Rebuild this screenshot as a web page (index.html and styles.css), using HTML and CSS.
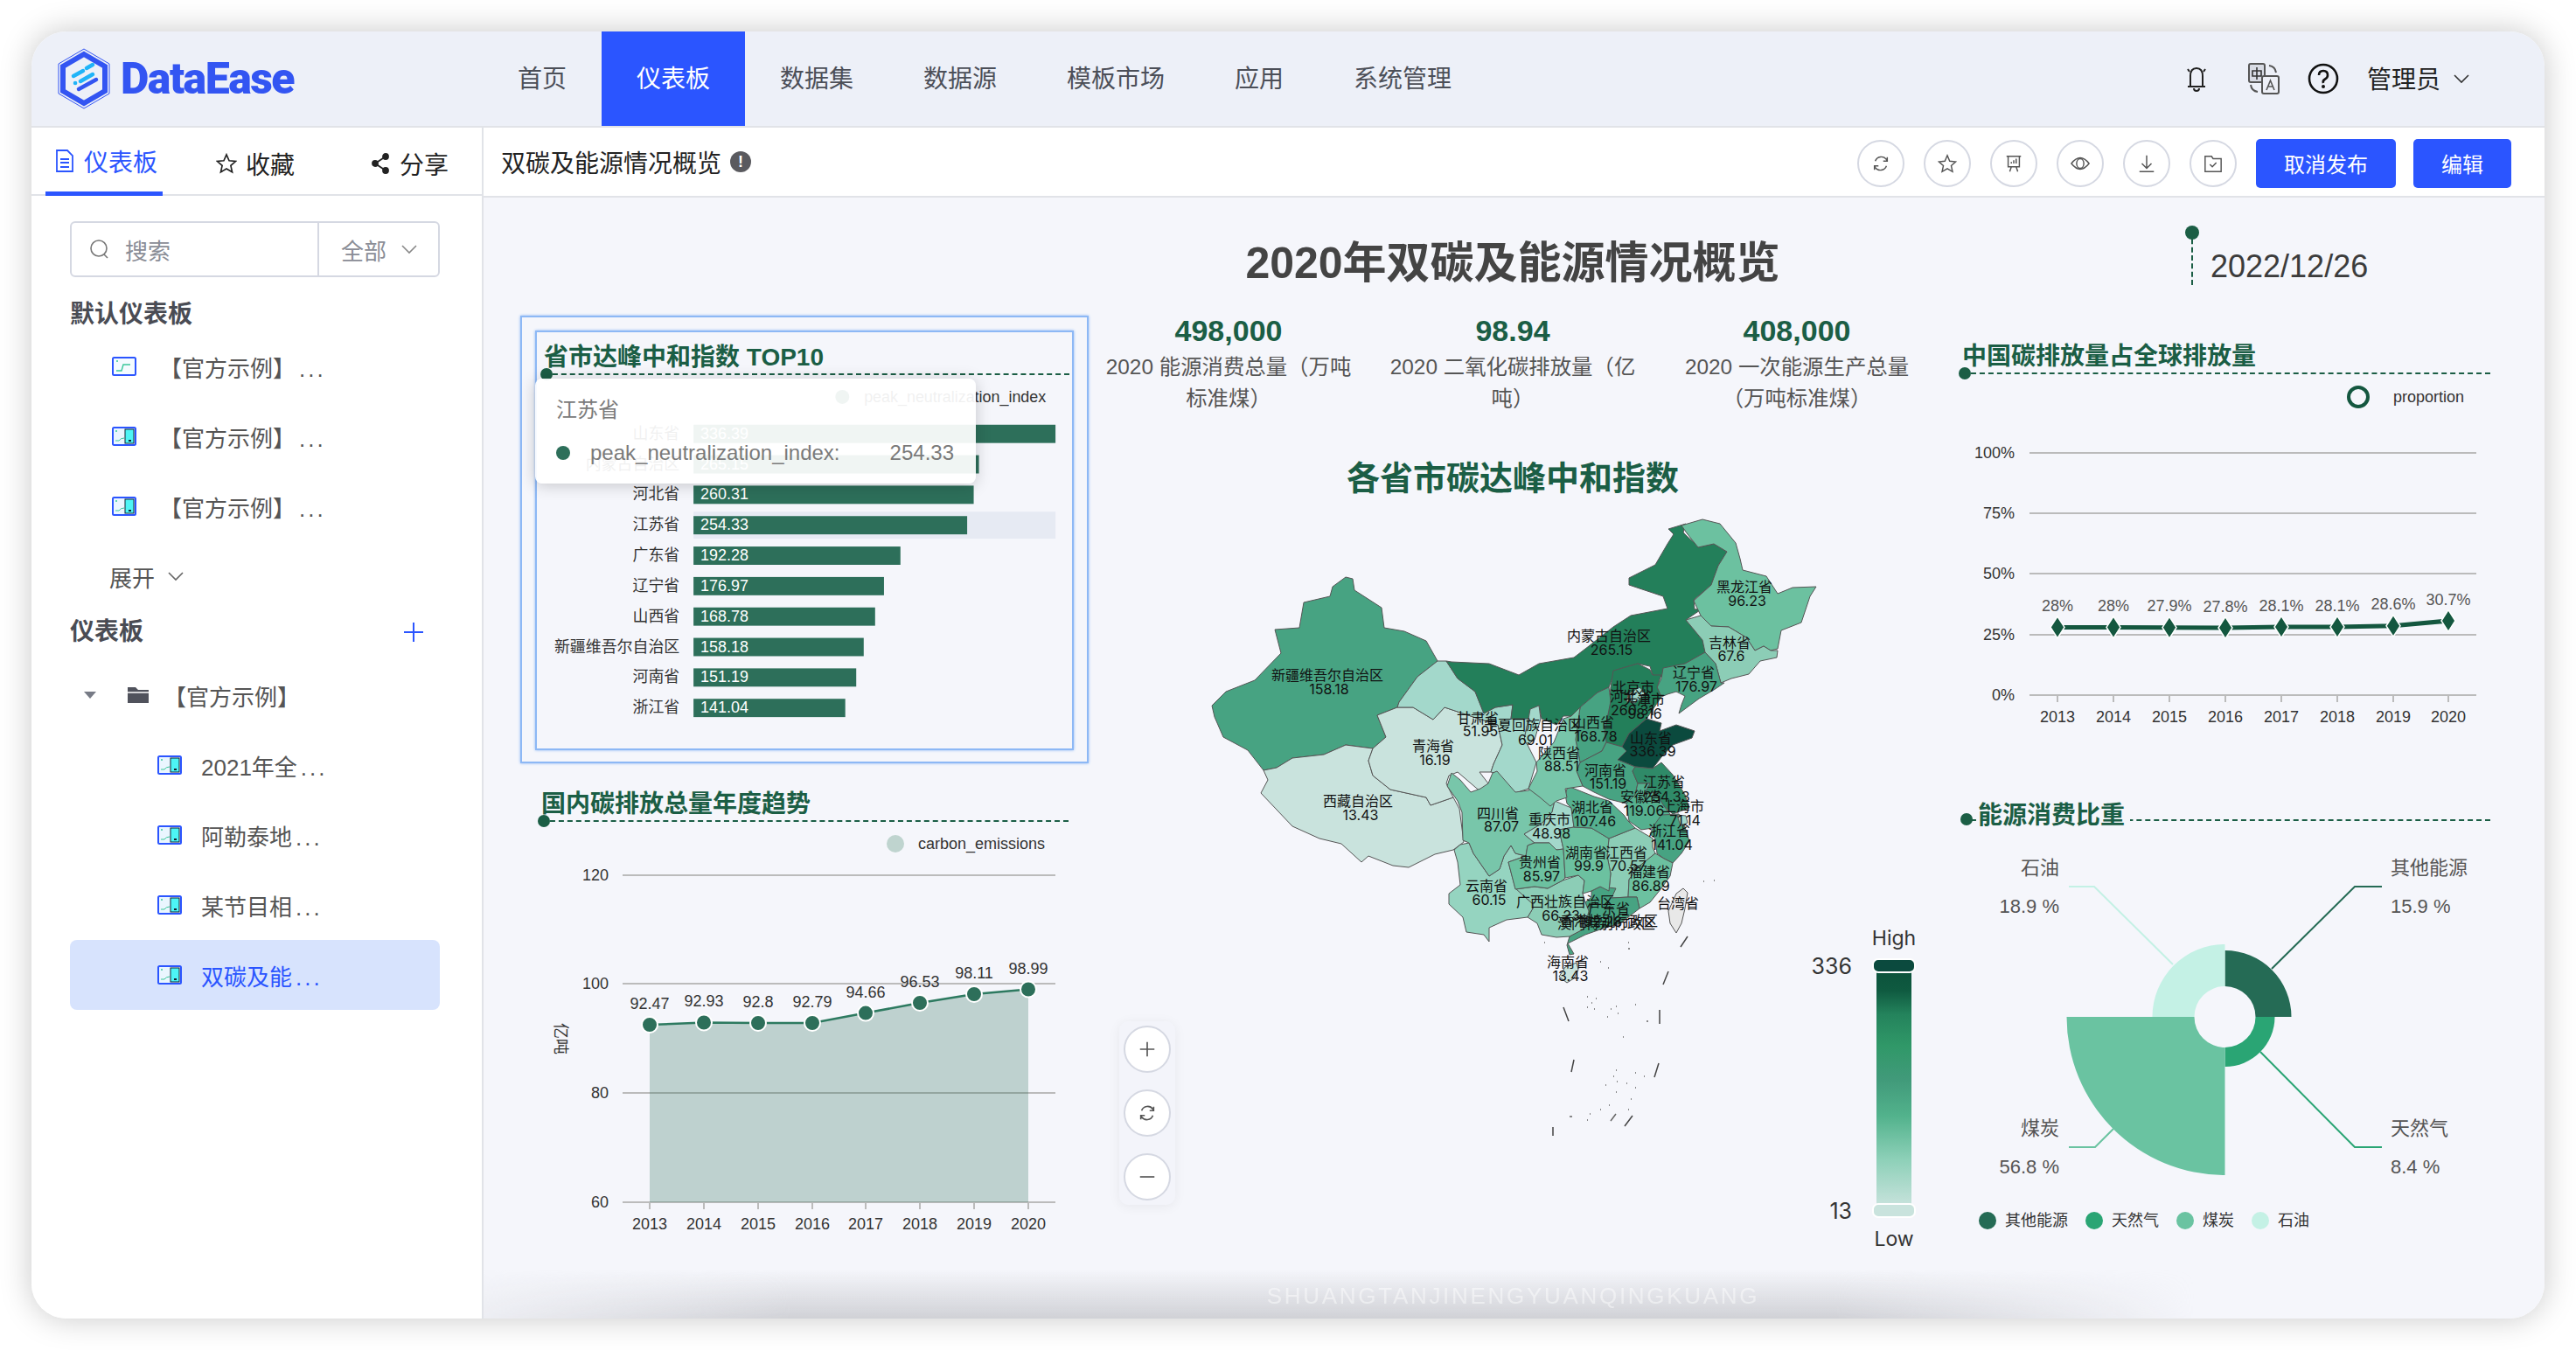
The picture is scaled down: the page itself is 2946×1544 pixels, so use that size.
FILE: index.html
```html
<!DOCTYPE html>
<html lang="en">
<head>
    <meta charset="UTF-8">
    <meta name="viewport" content="width=device-width, initial-scale=1.0">
    <title>DataEase</title>
    <link rel="stylesheet" href="styles.css">
</head>
<body>
    <svg class="defs" width="0" height="0">
        <symbol id="board" viewBox="0 0 28 22">
            <rect x="1" y="1" width="26" height="20" rx="1.5" fill="#eaf6ff" stroke="#2b55ff" stroke-width="2"/>
            <rect x="15" y="3" width="10" height="16" fill="#4df5f5" stroke="#123" stroke-width="1"/>
            <rect x="19" y="15" width="3" height="2" fill="#123"/>
            <path d="M4 16h4q2-3 6-3" fill="none" stroke="#38c79a" stroke-width="1"/>
            <circle cx="5" cy="5" r="1" fill="#38c79a"/>
        </symbol>
        <symbol id="board-line" viewBox="0 0 28 22">
            <rect x="1" y="1" width="26" height="20" rx="1.5" fill="#f4fbff" stroke="#2b55ff" stroke-width="2"/>
            <path d="M5 16h6l2-7h8" fill="none" stroke="#38c79a" stroke-width="1.4"/>
            <circle cx="6" cy="5" r="1" fill="#38c79a"/>
        </symbol>
    </svg>

    <div class="window">
        <header class="header">
            <div class="logo">
                <svg class="logo-mark" viewBox="0 0 60 70">
                    <path d="M30 1 59 18v34L30 69 1 52V18z" fill="none" stroke="#3355f2" stroke-width="1"/>
                    <path d="M30 7 54 21v28L30 63 6 49V21z" fill="none" stroke="#3355f2" stroke-width="6"/>
                    <path d="M33 23l7-4M18 32l11-6" stroke="#20b4f8" stroke-width="4.5" stroke-linecap="round"/>
                    <path d="M26 38l14-8M20 40h.1" stroke="#20b4f8" stroke-width="4.5" stroke-linecap="round"/>
                    <path d="M24 47l20-11" stroke="#3355f2" stroke-width="4.5" stroke-linecap="round"/>
                </svg>
                <span class="logo-text">DataEase</span>
            </div>
            <nav class="nav">
                <a href="#">首页</a>
                <a href="#" class="active">仪表板</a>
                <a href="#">数据集</a>
                <a href="#">数据源</a>
                <a href="#">模板市场</a>
                <a href="#">应用</a>
                <a href="#">系统管理</a>
            </nav>
            <div class="header-right">
                <svg class="icon-bell" viewBox="0 0 26 32" fill="none" stroke="#222" stroke-width="2">
                    <path d="M13 4c-5 0-7 4-7 9v12h14V13c0-5-2-9-7-9zM3 25h20M10 27a3 3 0 0 0 6 0M3 5l2 3M23 5l-2 3"/>
                </svg>
                <svg class="icon-lang" viewBox="0 0 36 36" fill="none" stroke="#555" stroke-width="2">
                    <rect x="1" y="1" width="18" height="21" rx="2" fill="#d8dbe4"/>
                    <path d="M10 5v14M5 9h10v6H5z" stroke="#333" stroke-width="1.6"/>
                    <rect x="16" y="15" width="19" height="20" rx="2" fill="#eef0f7"/>
                    <path d="M21 31l4.500-11 4.500 11M22.500 27h6" stroke-width="1.6"/>
                    <path d="M24 3q7 1 8 8M3 25q1 7 8 8"/>
                </svg>
                <svg class="icon-help" viewBox="0 0 36 36" fill="none" stroke="#111" stroke-width="2.600">
                    <circle cx="18" cy="18" r="16"/>
                    <path d="M13 14q0-5 5-5t5 5q0 3-3 4.500t-2 4.500"/>
                    <circle cx="18" cy="27" r="1" stroke-width="2"/>
                </svg>
                <span class="user">管理员</span>
                <svg class="chevron" viewBox="0 0 20 12" fill="none" stroke="#333" stroke-width="1.600"><path d="M2 2l8 8 8-8"/></svg>
            </div>
        </header>

        <div class="body">
            <aside class="sidebar">
                <div class="tabs">
                    <div class="tab active">
                        <svg class="tab-icon" viewBox="0 0 22 26" fill="none" stroke="#2b55ff" stroke-width="1.800"><path d="M2 1h12l6 6v18H2zM6 11h10M6 15h10M6 20h10"/></svg>
                        <span>仪表板</span>
                    </div>
                    <div class="tab">
                        <svg class="tab-icon" viewBox="0 0 26 26" fill="none" stroke="#222" stroke-width="1.800"><path d="M13 2l3.300 7.500 8 .8-6 5.300 1.800 8L13 19.500 5.900 23.600l1.800-8-6-5.300 8-.8z"/></svg>
                        <span>收藏</span>
                    </div>
                    <div class="tab">
                        <svg class="tab-icon" viewBox="0 0 22 26" fill="#222" stroke="#222" stroke-width="1.800"><path d="M17 5 5 13l12 8" fill="none"/><circle cx="17" cy="5" r="3"/><circle cx="5" cy="13" r="3"/><circle cx="17" cy="21" r="3"/></svg>
                        <span>分享</span>
                    </div>
                </div>
                <div class="side-content">
                    <div class="search">
                        <div class="search-input">
                            <svg class="search-icon" viewBox="0 0 24 24" fill="none" stroke="#777" stroke-width="1.600"><circle cx="11" cy="11" r="9"/><path d="M17 18l4 4"/></svg>
                            <span>搜索</span>
                        </div>
                        <div class="search-type">
                            <span>全部</span>
                            <svg class="chevron" viewBox="0 0 20 12" fill="none" stroke="#888" stroke-width="1.600"><path d="M2 2l8 8 8-8"/></svg>
                        </div>
                    </div>
                    <div class="side-title">默认仪表板</div>
                    <div class="side-item"><svg class="board-icon"><use href="#board-line"/></svg><span>【官方示例】<span class="dots">...</span></span></div>
                    <div class="side-item"><svg class="board-icon"><use href="#board"/></svg><span>【官方示例】<span class="dots">...</span></span></div>
                    <div class="side-item"><svg class="board-icon"><use href="#board"/></svg><span>【官方示例】<span class="dots">...</span></span></div>
                    <div class="side-more">
                        <span>展开</span>
                        <svg class="chevron" viewBox="0 0 20 12" fill="none" stroke="#666" stroke-width="1.600"><path d="M2 2l8 8 8-8"/></svg>
                    </div>
                    <div class="side-title side-title-add">
                        <span>仪表板</span>
                        <svg class="add-icon" viewBox="0 0 24 24" stroke="#2b55ff" stroke-width="2"><path d="M12 1v22M1 12h22"/></svg>
                    </div>
                    <div class="folder-row">
                        <span class="caret"></span>
                        <svg class="folder-icon" viewBox="0 0 26 22" fill="#50525c"><path d="M1 2h9l3 3h12v15H1z"/><path d="M1 8h24" stroke="#fff" stroke-width="1.500"/></svg>
                        <span>【官方示例】</span>
                    </div>
                    <div class="tree-item"><svg class="board-icon"><use href="#board"/></svg><span>2021年全<span class="dots">...</span></span></div>
                    <div class="tree-item"><svg class="board-icon"><use href="#board"/></svg><span>阿勒泰地<span class="dots">...</span></span></div>
                    <div class="tree-item"><svg class="board-icon"><use href="#board"/></svg><span>某节目相<span class="dots">...</span></span></div>
                    <div class="tree-item selected"><svg class="board-icon"><use href="#board"/></svg><span>双碳及能<span class="dots">...</span></span></div>
                </div>
            </aside>

            <main class="main">
                <div class="toolbar">
                    <span class="page-name">双碳及能源情况概览</span>
                    <span class="info-dot">!</span>
                    <div class="tool-group">
                        <span class="round-btn"><svg viewBox="0 0 24 24"><path d="M5 9a8 8 0 0 1 14-2l1 2M19 15a8 8 0 0 1-14 2l-1-2M20 4v5h-5M4 20v-5h5"/></svg></span>
                        <span class="round-btn"><svg viewBox="0 0 24 24"><path d="M12 2l3 7 7.500.8-5.600 5 1.600 7.400L12 18.500l-6.500 3.700 1.600-7.400-5.600-5L9 9z"/></svg></span>
                        <span class="round-btn"><svg viewBox="0 0 24 24"><path d="M3 3h18M5 3v13h14V3M9 16l-2 6M15 16l2 6M9 12v-2M12 12V8M15 12V6"/></svg></span>
                        <span class="round-btn"><svg viewBox="0 0 24 24"><path d="M1 12q11-14 22 0-11 14-22 0z"/><ellipse cx="12" cy="12" rx="4.500" ry="6"/></svg></span>
                        <span class="round-btn"><svg viewBox="0 0 24 24"><path d="M12 2v16M6 12l6 6 6-6M3 22h18"/></svg></span>
                        <span class="round-btn"><svg viewBox="0 0 24 24"><path d="M2 3h8l2 3h10v16H2zM8 13l3 3 5-5"/></svg></span>
                        <button class="btn">取消发布</button>
                        <button class="btn btn-small">编辑</button>
                    </div>
                </div>

                <div class="dash">
                    <h1 class="dash-title">2020年双碳及能源情况概览</h1>
                    <div class="dash-date"><span class="date-text">2022/12/26</span></div>

                    <section class="col col-left">
                        <div class="panel-select">
                            <div class="panel-inner">
                                <div class="chart-title"><span>省市达峰中和指数 TOP10</span></div>
                                <svg class="chart chart-bars" viewBox="612 428 615 426">
                                    <circle class="legend-dot" cx="963" cy="453" r="8"/>
                                    <text class="ct ct-start" x="988" y="453">peak_neutralization_index</text>
                                    <rect class="row-hover" x="792" y="585" width="416" height="31"/>
                                    <g class="bar">
                                        <rect x="792" y="485" width="416" height="21"/>
                                        <rect x="792" y="520" width="328" height="21"/>
                                        <rect x="792" y="555" width="322" height="21"/>
                                        <rect x="792" y="590" width="314.500" height="21"/>
                                        <rect x="792" y="625" width="237.800" height="21"/>
                                        <rect x="792" y="660" width="218.900" height="21"/>
                                        <rect x="792" y="695" width="208.700" height="21"/>
                                        <rect x="792" y="730" width="195.600" height="21"/>
                                        <rect x="792" y="765" width="187" height="21"/>
                                        <rect x="792" y="800" width="174.400" height="21"/>
                                    </g>
                                    <g class="ct ct-end">
                                        <text x="776" y="495">山东省</text>
                                        <text x="776" y="530">内蒙古自治区</text>
                                        <text x="776" y="565">河北省</text>
                                        <text x="776" y="600">江苏省</text>
                                        <text x="776" y="635">广东省</text>
                                        <text x="776" y="670">辽宁省</text>
                                        <text x="776" y="705">山西省</text>
                                        <text x="776" y="740">新疆维吾尔自治区</text>
                                        <text x="776" y="775">河南省</text>
                                        <text x="776" y="810">浙江省</text>
                                    </g>
                                    <g class="ct ct-start ct-white">
                                        <text x="800" y="495">336.39</text>
                                        <text x="800" y="530">265.15</text>
                                        <text x="800" y="565">260.31</text>
                                        <text x="800" y="600">254.33</text>
                                        <text x="800" y="635">192.28</text>
                                        <text x="800" y="670">176.97</text>
                                        <text x="800" y="705">168.78</text>
                                        <text x="800" y="740">158.18</text>
                                        <text x="800" y="775">151.19</text>
                                        <text x="800" y="810">141.04</text>
                                    </g>
                                </svg>
                                <div class="tooltip">
                                    <div class="tooltip-title">江苏省</div>
                                    <div class="tooltip-row">
                                        <span class="tooltip-dot"></span>
                                        <span class="tooltip-name">peak_neutralization_index:</span>
                                        <span>254.33</span>
                                    </div>
                                </div>
                            </div>
                        </div>
                        <div class="chart-block">
                            <div class="chart-title"><span>国内碳排放总量年度趋势</span></div>
                            <svg class="chart chart-trend" viewBox="595 940 650 480">
                                <circle class="area-dot" cx="1024" cy="965" r="10"/>
                                <text class="ct ct-start" x="1050" y="965">carbon_emissions</text>
                                <g class="grid">
                                    <path d="M712 1001H1207M712 1125H1207M712 1250H1207M712 1375H1207"/>
                                    <path d="M743 1375v8M805 1375v8M867 1375v8M929 1375v8M990 1375v8M1052 1375v8M1114 1375v8M1176 1375v8"/>
                                </g>
                                <g class="ct ct-end">
                                    <text x="696" y="1001">120</text>
                                    <text x="696" y="1125">100</text>
                                    <text x="696" y="1250">80</text>
                                    <text x="696" y="1375">60</text>
                                </g>
                                <text class="ct" transform="translate(641 1188) rotate(90)">亿吨</text>
                                <polygon class="area" points="743,1172 805,1169.500 867,1170 929,1170 990,1158.600 1052,1147 1114,1137 1176,1131.500 1176,1375 743,1375"/>
                                <polyline class="trend-line" points="743,1172 805,1169.500 867,1170 929,1170 990,1158.600 1052,1147 1114,1137 1176,1131.500"/>
                                <g class="trend-dots">
                                    <circle cx="743" cy="1172" r="9"/>
                                    <circle cx="805" cy="1169.500" r="9"/>
                                    <circle cx="867" cy="1170" r="9"/>
                                    <circle cx="929" cy="1170" r="9"/>
                                    <circle cx="990" cy="1158.600" r="9"/>
                                    <circle cx="1052" cy="1147" r="9"/>
                                    <circle cx="1114" cy="1137" r="9"/>
                                    <circle cx="1176" cy="1131.500" r="9"/>
                                </g>
                                <g class="ct">
                                    <text x="743" y="1148">92.47</text>
                                    <text x="805" y="1145">92.93</text>
                                    <text x="867" y="1146">92.8</text>
                                    <text x="929" y="1146">92.79</text>
                                    <text x="990" y="1135">94.66</text>
                                    <text x="1052" y="1123">96.53</text>
                                    <text x="1114" y="1113">98.11</text>
                                    <text x="1176" y="1108">98.99</text>
                                    <text x="743" y="1400">2013</text>
                                    <text x="805" y="1400">2014</text>
                                    <text x="867" y="1400">2015</text>
                                    <text x="929" y="1400">2016</text>
                                    <text x="990" y="1400">2017</text>
                                    <text x="1052" y="1400">2018</text>
                                    <text x="1114" y="1400">2019</text>
                                    <text x="1176" y="1400">2020</text>
                                </g>
                            </svg>
                        </div>
                    </section>

                    <section class="col col-center">
                        <div class="kpis">
                            <div class="kpi">
                                <div class="kpi-value">498,000</div>
                                <div class="kpi-label">2020 能源消费总量（万吨标准煤）</div>
                            </div>
                            <div class="kpi">
                                <div class="kpi-value">98.94</div>
                                <div class="kpi-label">2020 二氧化碳排放量（亿吨）</div>
                            </div>
                            <div class="kpi">
                                <div class="kpi-value">408,000</div>
                                <div class="kpi-label">2020 一次能源生产总量（万吨标准煤）</div>
                            </div>
                        </div>
                        <h2 class="map-title">各省市碳达峰中和指数</h2>
                        <svg class="map" viewBox="1380 590 820 860">
                            <g class="prov">
                                <polygon class="c4" points="1386,808 1402,792 1435,779 1465,748 1458,721 1486,719 1491,690 1521,683 1524,672 1539,661 1547,663 1549,676 1580,696 1583,719 1606,723 1631,734 1644,757 1621,775 1600,804 1598,810 1575,819 1585,844 1570,857 1539,853 1514,864 1478,868 1460,879 1445,882 1427,859 1399,844 1389,821"/>
                                <polygon class="c0" points="1445,882 1460,879 1478,868 1514,864 1539,853 1570,857 1565,871 1570,888 1590,904 1631,913 1636,922 1662,913 1669,926 1674,964 1662,973 1641,978 1611,993 1593,991 1565,980 1557,987 1534,966 1509,960 1478,946 1442,908 1450,893"/>
                                <polygon class="c0" points="1575,819 1598,810 1616,810 1639,824 1652,810 1685,821 1713,830 1718,853 1708,875 1705,884 1692,884 1702,897 1695,908 1667,884 1657,888 1654,897 1662,913 1636,922 1631,913 1590,904 1570,888 1565,871 1570,857 1585,844"/>
                                <polygon class="c1" points="1644,757 1654,757 1667,777 1687,792 1697,817 1710,810 1730,807 1728,823 1748,823 1743,847 1747,853 1757,873 1748,903 1733,908 1713,886 1705,884 1708,875 1718,853 1713,830 1685,821 1652,810 1639,824 1616,810 1598,810 1600,804 1621,775"/>
                                <polygon class="c6" points="1654,757 1660,758 1703,760 1737,773 1760,760 1800,753 1817,740 1845,718 1865,705 1907,697 1902,683 1863,670 1863,662 1893,647 1907,623 1914,612 1908,606 1928,600 1925,610 1930,615 1938,622 1942,627 1960,623 1975,632 1965,648 1957,670 1937,687 1938,698 1947,697 1928,710 1947,733 1950,747 1927,760 1907,765 1900,775 1890,773 1887,763 1873,760 1847,768 1840,787 1827,793 1807,810 1797,820 1788,820 1780,830 1763,823 1760,808 1752,812 1748,823 1728,823 1730,807 1710,810 1697,817 1687,792 1667,777"/>
                                <polygon class="c2" points="1923,602 1947,595 1967,600 1985,622 1990,640 1993,653 2020,660 2033,680 2050,673 2077,672 2070,683 2060,713 2037,722 2033,743 2025,745 2017,740 2007,745 1997,730 1977,718 1957,717 1945,705 1937,688 1957,670 1965,648 1975,632 1960,623 1942,627 1938,622 1930,612"/>
                                <polygon class="c1b" points="1928,710 1945,705 1957,717 1977,718 1997,730 2007,745 2017,740 2025,745 2033,745 2032,753 2013,757 2000,772 1980,777 1968,782 1962,760 1950,747 1947,733"/>
                                <polygon class="c4" points="1950,747 1962,760 1968,782 1972,782 1960,790 1943,800 1920,817 1923,807 1927,797 1917,792 1907,795 1900,798 1895,787 1900,777 1902,765 1927,760"/>
                                <polygon class="c6" points="1845,768 1873,760 1887,767 1890,773 1900,773 1895,787 1900,798 1883,823 1863,840 1855,855 1837,850 1835,837 1840,813 1842,787"/>
                                <polygon class="c1" points="1862,795 1875,787 1882,795 1870,805 1860,803"/>
                                <polygon class="c4" points="1827,793 1840,787 1842,803 1840,813 1835,837 1837,850 1832,860 1807,873 1802,847 1807,810"/>
                                <polygon class="c8" points="1855,855 1863,840 1883,823 1900,828 1898,837 1917,830 1938,837 1935,845 1913,853 1900,867 1890,880 1870,878 1850,870 1860,860"/>
                                <polygon class="c4" points="1837,850 1855,855 1860,860 1850,870 1870,878 1867,883 1873,897 1870,910 1860,920 1840,915 1823,907 1810,900 1803,883 1807,873 1832,860"/>
                                <polygon class="c5" points="1870,878 1890,880 1900,873 1913,887 1927,910 1932,925 1913,932 1903,923 1893,907 1880,910 1887,897 1873,897 1867,883"/>
                                <polygon class="c3" points="1873,897 1887,897 1880,910 1893,907 1903,923 1910,932 1900,943 1890,948 1877,950 1863,940 1860,920 1870,910"/>
                                <polygon class="c4" points="1900,933 1920,932 1927,947 1932,963 1923,977 1913,988 1903,983 1895,977 1893,960 1887,955 1893,943"/>
                                <polygon class="c1" points="1918,933 1928,934 1930,942 1922,946"/>
                                <polygon class="c1b" points="1840,960 1870,948 1890,960 1890,970 1893,977 1873,993 1863,1007 1862,1027 1843,1028 1840,1020 1842,1000 1838,980"/>
                                <polygon class="c2" points="1893,977 1903,983 1913,988 1910,1003 1900,1017 1887,1033 1875,1040 1872,1027 1862,1027 1863,1007 1873,993"/>
                                <polygon class="c4" points="1820,1020 1830,1015 1848,1017 1843,1028 1862,1027 1872,1027 1875,1040 1853,1057 1833,1063 1813,1070 1793,1080 1800,1092 1795,1093 1792,1082 1795,1072 1812,1063 1817,1043 1813,1033 1820,1027"/>
                                <polygon class="c1b" points="1733,1018 1755,1015 1770,1017 1787,1008 1805,1002 1812,1008 1810,1023 1813,1033 1817,1043 1812,1063 1795,1072 1780,1073 1763,1070 1758,1057 1747,1050 1753,1040 1753,1035"/>
                                <polygon class="c1c" points="1663,973 1670,967 1680,965 1685,977 1703,1003 1715,995 1720,980 1728,968 1733,977 1745,980 1725,987 1733,1017 1753,1035 1753,1040 1747,1050 1723,1053 1703,1062 1703,1078 1697,1070 1677,1067 1673,1050 1657,1035 1657,1023 1670,1013 1667,987"/>
                                <polygon class="c2b" points="1660,885 1670,893 1682,907 1693,903 1702,897 1707,885 1712,883 1733,907 1748,905 1752,903 1778,917 1775,930 1763,943 1743,955 1755,965 1747,968 1745,980 1733,977 1728,968 1720,980 1715,995 1703,1003 1685,977 1680,965 1673,962 1672,930 1667,917 1655,900"/>
                                <polygon class="c1" points="1778,917 1797,925 1800,947 1783,950 1788,972 1780,973 1772,965 1755,965 1743,955 1763,943 1775,930"/>
                                <polygon class="c2" points="1747,968 1755,965 1772,965 1780,973 1788,972 1790,1005 1787,1008 1770,1017 1755,1015 1733,1018 1725,987 1745,980"/>
                                <polygon class="c2" points="1800,947 1820,948 1840,960 1838,980 1842,1000 1840,1020 1830,1015 1820,1020 1810,1023 1812,1008 1805,1002 1790,1005 1788,972 1783,950"/>
                                <polygon class="c3" points="1790,910 1793,900 1823,912 1840,917 1857,933 1862,940 1870,948 1840,960 1820,948 1800,947 1797,925 1792,920"/>
                                <polygon class="c2b" points="1807,810 1802,847 1807,873 1803,883 1810,900 1790,903 1792,913 1780,917 1773,923 1760,912 1748,903 1758,883 1757,873 1777,850 1788,823 1797,820"/>
                                <polygon class="c1" points="1750,812 1760,808 1762,823 1755,847 1747,853 1743,847 1748,823"/>
                                <polygon class="c0" points="1790,1107 1803,1102 1805,1110 1800,1120 1792,1125 1783,1118"/>
                                <polygon class="c-none" points="1925,1017 1930,1022 1927,1040 1923,1057 1917,1068 1910,1057 1908,1043 1917,1023"/>
                            </g>
                            <path class="dashes" d="M1930 1072l-8 12M1908 1112l-6 15M1898 1156v16M1897 1217l-5 16M1867 1277l-9 12M1776 1290v10M1800 1213l-3 14M1788 1153l6 16"/>
                            <path class="isles" d="M1815 1141h1M1820 1148h1M1815 1153h1M1823 1155h1M1825 1143h1M1842 1155h1M1848 1152h1M1838 1164h1M1850 1160h1M1870 1150h1M1883 1169h2M1856 1187h1M1848 1225h1M1849 1238h1M1845 1232h1M1870 1228h1M1880 1232h1M1836 1242h1M1860 1240h1M1870 1245h1M1848 1250h1M1865 1258h1M1840 1265h1M1830 1270h1M1818 1275h1M1795 1278h3M1815 1282h1M1848 1275l-6 8M1862 1270h1M1766 1079h1M1862 1079h1M1862 1086h2M1897 1017h1M1948 1009h1M1960 1008h1M1830 1101h1M1839 1108h1"/>
                            <g class="map-label">
                                <text x="1518" y="773">新疆维吾尔自治区</text><text x="1520" y="789">158.18</text>
                                <text x="1553" y="917">西藏自治区</text><text x="1556" y="933">13.43</text>
                                <text x="1639" y="854">青海省</text><text x="1641" y="870">16.19</text>
                                <text x="1995" y="672">黑龙江省</text><text x="1998" y="688">96.23</text>
                                <text x="1840" y="728">内蒙古自治区</text><text x="1843" y="744">265.15</text>
                                <text x="1978" y="736">吉林省</text><text x="1980" y="751">67.6</text>
                                <text x="1937" y="770">辽宁省</text><text x="1940" y="786">176.97</text>
                                <text x="1868" y="787">北京市</text>
                                <text x="1865" y="797">河北省</text><text x="1867" y="813">260.31</text>
                                <text x="1880" y="801">天津市</text><text x="1881" y="817">98.16</text>
                                <text x="1690" y="822">甘肃省</text><text x="1693" y="837">51.95</text>
                                <text x="1753" y="830">宁夏回族自治区</text><text x="1756" y="847">69.01</text>
                                <text x="1822" y="827">山西省</text><text x="1825" y="843">168.78</text>
                                <text x="1783" y="862">陕西省</text><text x="1786" y="877">88.51</text>
                                <text x="1888" y="845">山东省</text><text x="1890" y="860">336.39</text>
                                <text x="1836" y="882">河南省</text><text x="1839" y="897">151.19</text>
                                <text x="1903" y="895">江苏省</text><text x="1906" y="912">254.33</text>
                                <text x="1877" y="912">安徽省</text><text x="1880" y="928">119.06</text>
                                <text x="1925" y="923">上海市</text><text x="1927" y="939">71.14</text>
                                <text x="1821" y="924">湖北省</text><text x="1824" y="940">107.46</text>
                                <text x="1713" y="931">四川省</text><text x="1717" y="946">87.07</text>
                                <text x="1772" y="938">重庆市</text><text x="1774" y="954">48.98</text>
                                <text x="1909" y="951">浙江省</text><text x="1912" y="967">141.04</text>
                                <text x="1814" y="976">湖南省</text><text x="1817" y="991">99.9</text>
                                <text x="1860" y="976">江西省</text><text x="1862" y="991">70.57</text>
                                <text x="1886" y="998">福建省</text><text x="1888" y="1014">86.89</text>
                                <text x="1761" y="987">贵州省</text><text x="1763" y="1003">85.97</text>
                                <text x="1700" y="1014">云南省</text><text x="1703" y="1030">60.15</text>
                                <text x="1790" y="1032">广西壮族自治区</text><text x="1785" y="1048">66.23</text>
                                <text x="1840" y="1040">广东省</text><text x="1830" y="1055">192.28</text>
                                <text x="1840" y="1054">香港特别行政区</text><text x="1837" y="1057">澳门特别行政区</text>
                                <text x="1919" y="1034">台湾省</text>
                                <text x="1793" y="1101">海南省</text><text x="1796" y="1117">13.43</text>
                            </g>
                            <defs>
                                <linearGradient id="range" x1="0" y1="0" x2="0" y2="1">
                                    <stop offset="0" stop-color="#0b513b"/>
                                    <stop offset=".1" stop-color="#0f5a40"/>
                                    <stop offset=".2" stop-color="#24835c"/>
                                    <stop offset=".33" stop-color="#309868"/>
                                    <stop offset=".47" stop-color="#419a7a"/>
                                    <stop offset=".62" stop-color="#52b28c"/>
                                    <stop offset=".8" stop-color="#8dd0b8"/>
                                    <stop offset="1" stop-color="#c9e3dd"/>
                                </linearGradient>
                            </defs>
                            <rect x="2146" y="1106" width="40" height="276" fill="url(#range)"/>
                            <rect class="handle" x="2142" y="1098" width="48" height="15" rx="6" fill="#0b4a3e"/>
                            <rect class="handle" x="2142" y="1378" width="48" height="15" rx="6" fill="#c9e3dd"/>
                            <g class="range-text">
                                <text x="2166" y="1074">High</text>
                                <text x="2166" y="1418">Low</text>
                                <text class="range-num" x="2118" y="1106">336</text>
                                <text class="range-num" x="2118" y="1386">13</text>
                            </g>
                        </svg>
                        <div class="zoom-card">
                            <span class="zoom-btn"><svg viewBox="0 0 24 24"><path d="M12 3v18M3 12h18"/></svg></span>
                            <span class="zoom-btn"><svg viewBox="0 0 24 24"><path d="M5 9a8 8 0 0 1 14-2l1 2M19 15a8 8 0 0 1-14 2l-1-2M20 4v5h-5M4 20v-5h5"/></svg></span>
                            <span class="zoom-btn"><svg viewBox="0 0 24 24"><path d="M3 12h18"/></svg></span>
                        </div>
                    </section>

                    <section class="col col-right">
                        <div class="chart-title"><span>中国碳排放量占全球排放量</span></div>
                        <svg class="chart chart-share" viewBox="2215 429 645 420">
                            <circle class="ring" cx="2697" cy="453" r="11"/>
                            <text class="ct ct-start" x="2737" y="453">proportion</text>
                            <g class="grid">
                                <path d="M2321 517H2832M2321 586H2832M2321 655H2832M2321 725H2832M2321 794H2832"/>
                                <path d="M2353 794v8M2417 794v8M2481 794v8M2545 794v8M2609 794v8M2673 794v8M2737 794v8M2800 794v8"/>
                            </g>
                            <g class="ct ct-end">
                                <text x="2304" y="517">100%</text>
                                <text x="2304" y="586">75%</text>
                                <text x="2304" y="655">50%</text>
                                <text x="2304" y="725">25%</text>
                                <text x="2304" y="794">0%</text>
                            </g>
                            <polyline class="share-line" points="2353,716.400 2417,716.400 2481,716.700 2545,717 2609,716 2673,716 2737,714.800 2800,709"/>
                            <g class="diamonds">
                                <path d="M2353 704l8 12.400-8 12.400-8-12.400z"/>
                                <path d="M2417 704l8 12.400-8 12.400-8-12.400z"/>
                                <path d="M2481 704.300l8 12.400-8 12.400-8-12.400z"/>
                                <path d="M2545 704.600l8 12.400-8 12.400-8-12.400z"/>
                                <path d="M2609 703.600l8 12.400-8 12.400-8-12.400z"/>
                                <path d="M2673 703.600l8 12.400-8 12.400-8-12.400z"/>
                                <path d="M2737 702.400l8 12.400-8 12.400-8-12.400z"/>
                                <path d="M2800 696.600l8 12.400-8 12.400-8-12.400z"/>
                            </g>
                            <g class="ct ct-grey">
                                <text x="2353" y="692">28%</text>
                                <text x="2417" y="692">28%</text>
                                <text x="2481" y="692">27.9%</text>
                                <text x="2545" y="693">27.8%</text>
                                <text x="2609" y="692">28.1%</text>
                                <text x="2673" y="692">28.1%</text>
                                <text x="2737" y="690">28.6%</text>
                                <text x="2800" y="685">30.7%</text>
                            </g>
                            <g class="ct">
                                <text x="2353" y="819">2013</text>
                                <text x="2417" y="819">2014</text>
                                <text x="2481" y="819">2015</text>
                                <text x="2545" y="819">2016</text>
                                <text x="2609" y="819">2017</text>
                                <text x="2673" y="819">2018</text>
                                <text x="2737" y="819">2019</text>
                                <text x="2800" y="819">2020</text>
                            </g>
                        </svg>
                        <div class="chart-title chart-title-pie"><span>能源消费比重</span></div>
                        <svg class="chart chart-pie" viewBox="2215 950 645 480">
                            <path fill="#256b55" d="M2544.500 1088a76 76 0 0 1 76 76h-41a35 35 0 0 0-35-35z"/>
                            <path fill="#2aa574" d="M2601.500 1164a57 57 0 0 1-57 57v-22a35 35 0 0 0 35-35z"/>
                            <path fill="#6ac3a1" d="M2544.500 1345a181 181 0 0 1-181-181h146a35 35 0 0 0 35 35z"/>
                            <path fill="#c4f1e5" d="M2461.500 1164a83 83 0 0 1 83-83v48a35 35 0 0 0-35 35z"/>
                            <g class="leader">
                                <polyline stroke="#256b55" points="2598,1109 2693,1015 2724,1015"/>
                                <polyline stroke="#c4f1e5" points="2485,1104 2395,1015 2366,1015"/>
                                <polyline stroke="#6ac3a1" points="2417,1292 2396,1313 2366,1313"/>
                                <polyline stroke="#2aa574" points="2585,1204 2693,1313 2724,1313"/>
                            </g>
                            <g class="pie-label pie-label-end">
                                <text x="2355" y="993">石油</text>
                                <text x="2355" y="1037">18.9 %</text>
                                <text x="2355" y="1291">煤炭</text>
                                <text x="2355" y="1335">56.8 %</text>
                            </g>
                            <g class="pie-label">
                                <text x="2734" y="993">其他能源</text>
                                <text x="2734" y="1037">15.9 %</text>
                                <text x="2734" y="1291">天然气</text>
                                <text x="2734" y="1335">8.4 %</text>
                            </g>
                            <circle fill="#256b55" cx="2273" cy="1397" r="10"/>
                            <circle fill="#2aa574" cx="2395" cy="1397" r="10"/>
                            <circle fill="#6ac3a1" cx="2499" cy="1397" r="10"/>
                            <circle fill="#c4f1e5" cx="2585" cy="1397" r="10"/>
                            <g class="ct ct-start">
                                <text x="2293" y="1397">其他能源</text>
                                <text x="2415" y="1397">天然气</text>
                                <text x="2519" y="1397">煤炭</text>
                                <text x="2605" y="1397">石油</text>
                            </g>
                        </svg>
                    </section>

                    <div class="bottom-fade"><span>SHUANGTANJINENGYUANQINGKUANG</span></div>
                </div>
            </main>
        </div>
    </div>
</body>
</html>
```

FILE: styles.css
```css
* {
    box-sizing: border-box;
}
body {
    margin: 0;
    padding: 36px;
    height: 1544px;
    background-color: #fff;
    font-family: "Liberation Sans", "Noto Sans CJK SC", sans-serif;
    color: #333;
    overflow: hidden;
}
.defs {
    display: block;
    height: 0;
}
.window {
    display: flex;
    flex-direction: column;
    width: 2874px;
    height: 1472px;
    border-radius: 40px;
    background-color: #fff;
    box-shadow: 0 0 36px rgba(0,0,0,0.22);
    overflow: hidden;
}

/* top bar */
.header {
    display: flex;
    align-items: center;
    flex: none;
    height: 110px;
    padding-left: 30px;
    background-color: #edf0f8;
    border-bottom: 2px solid #e1e3e8;
}
.logo {
    display: flex;
    align-items: center;
    width: 486px;
}
.logo-mark {
    width: 60px;
    height: 70px;
}
.logo-text {
    margin-left: 12px;
    font-family: Roboto, sans-serif;
    font-size: 50px;
    font-weight: 900;
    letter-spacing: -1.5px;
    color: #3355f2;
}
.nav {
    display: flex;
    align-self: stretch;
    height: 108px;
}
.nav a {
    display: flex;
    align-items: center;
    padding: 0 40px 4px;
    font-size: 28px;
    color: #4c4f58;
    text-decoration: none;
}
.nav a.active {
    background-color: #2b55ff;
    color: #fff;
}
.header-right {
    display: flex;
    align-items: center;
    margin-left: auto;
    padding-right: 85px;
}
.icon-bell {
    width: 26px;
    height: 32px;
    margin-right: 46px;
}
.icon-lang {
    width: 36px;
    height: 36px;
    margin-right: 32px;
}
.icon-help {
    width: 36px;
    height: 36px;
    margin-right: 32px;
}
.user {
    margin-bottom: 3px;
    font-size: 28px;
    color: #222;
}
.chevron {
    width: 20px;
    height: 12px;
}
.header-right .chevron {
    margin-left: 14px;
}

/* left tree */
.body {
    display: flex;
    flex: 1;
    min-height: 0;
}
.sidebar {
    flex: none;
    width: 517px;
    background-color: #fff;
    border-right: 2px solid #e1e3e8;
}
.tabs {
    display: grid;
    grid-template-columns: 185px 176px auto;
    height: 78px;
    padding-left: 16px;
    border-bottom: 2px solid #e1e3e8;
}
.tab {
    display: flex;
    align-items: center;
    gap: 10px;
    height: 78px;
    padding: 3px 0 0 10px;
    font-size: 28px;
    color: #222;
}
.tab-icon {
    width: 24px;
    height: 26px;
}
.tab.active {
    width: 134px;
    color: #2b55ff;
    border-bottom: 5px solid #2b55ff;
}
.side-content {
    padding: 29px 48px 0 44px;
}
.search {
    display: flex;
    height: 64px;
    border: 2px solid #d5d8e2;
    border-radius: 6px;
    font-size: 26px;
    color: #8a8d96;
}
.search-input {
    display: flex;
    align-items: center;
    gap: 17px;
    width: 283px;
    padding-left: 20px;
    border-right: 2px solid #d5d8e2;
}
.search-icon {
    width: 24px;
    height: 24px;
}
.search-type {
    display: flex;
    align-items: center;
    gap: 16px;
    padding-left: 25px;
}
.side-title {
    height: 38px;
    margin-top: 24px;
    font-size: 28px;
    font-weight: 700;
    line-height: 38px;
    color: #4a4c54;
}
.side-item {
    display: flex;
    align-items: center;
    gap: 26px;
    height: 80px;
    padding-left: 48px;
    font-size: 26px;
    color: #555;
}
.dots {
    margin-left: 4px;
    letter-spacing: 3px;
}
.board-icon {
    flex: none;
    width: 28px;
    height: 22px;
}
.side-more {
    display: flex;
    align-items: center;
    gap: 14px;
    height: 80px;
    padding-left: 45px;
    font-size: 26px;
    color: #555;
}
.side-title-add {
    display: flex;
    align-items: center;
    justify-content: space-between;
    margin: 5px 0 13px;
}
.add-icon {
    width: 24px;
    height: 24px;
    margin-right: 18px;
}
.folder-row {
    display: flex;
    align-items: center;
    height: 80px;
    padding-left: 16px;
    font-size: 26px;
    color: #555;
}
.caret {
    width: 0;
    height: 0;
    margin-right: 35px;
    border-style: solid;
    border-width: 8px 7px 0;
    border-color: #777b86 transparent transparent;
}
.folder-icon {
    width: 26px;
    height: 22px;
    margin-right: 16px;
}
.tree-item {
    display: flex;
    align-items: center;
    gap: 22px;
    height: 80px;
    padding-left: 100px;
    border-radius: 8px;
    font-size: 26px;
    color: #555;
}
.tree-item.selected {
    background-color: #d7e3fd;
    color: #2b55ff;
}

/* page toolbar */
.main {
    display: flex;
    flex: 1;
    flex-direction: column;
    min-width: 0;
    background-color: #f5f6fb;
}
.toolbar {
    display: flex;
    align-items: center;
    flex: none;
    height: 80px;
    padding: 0 38px 0 20px;
    background-color: #fff;
    border-bottom: 2px solid #e1e3e8;
}
.page-name {
    font-size: 28px;
    color: #222;
}
.info-dot {
    display: flex;
    align-items: center;
    justify-content: center;
    width: 24px;
    height: 24px;
    margin-left: 10px;
    border-radius: 50%;
    background-color: #5a5a5f;
    font-size: 18px;
    font-weight: 700;
    color: #fff;
}
.tool-group {
    display: flex;
    align-items: center;
    gap: 22px;
    margin: 3px 0 0 auto;
}
.round-btn {
    display: flex;
    align-items: center;
    justify-content: center;
    width: 54px;
    height: 54px;
    border: 2px solid #d5d8e2;
    border-radius: 50%;
    background-color: #fff;
}
.round-btn svg {
    width: 22px;
    height: 22px;
    fill: none;
    stroke: #555;
    stroke-width: 1.6;
}
.btn {
    width: 160px;
    height: 56px;
    border: none;
    border-radius: 5px;
    background-color: #2b55ff;
    font-family: inherit;
    font-size: 24px;
    color: #fff;
}
.btn-small {
    width: 112px;
    margin-left: -2px;
}

/* dashboard */
.dash {
    position: relative;
    flex: 1;
    display: grid;
    grid-template-columns: 650px 970px 645px;
    grid-template-rows: 135px 1fr;
    padding-left: 42px;
    overflow: hidden;
}
.dash-title {
    grid-column: 2;
    margin: 50px 0 0;
    font-size: 50px;
    font-weight: 700;
    line-height: 50px;
    text-align: center;
    color: #444;
}
.dash-date {
    grid-column: 3;
    margin: 38px 0 0 291px;
    width: 230px;
    height: 62px;
    padding: 19px 0 0 20px;
    border-left: 2px dashed #1b5e45;
    position: relative;
}
.dash-date::before {
    content: "";
    position: absolute;
    left: -9px;
    top: -6px;
    width: 16px;
    height: 16px;
    border-radius: 50%;
    background-color: #1b5e45;
}
.date-text {
    font-size: 36px;
    line-height: 44px;
    color: #3c3c3c;
}
.col-left,
.col-center,
.col-right {
    grid-row: 2;
}
.col-center {
    position: relative;
}
.panel-select {
    width: 650px;
    height: 512px;
    padding: 15px;
    border: 2px solid #8db8f5;
    box-shadow: 0 0 3px #8db8f5;
}
.panel-inner {
    position: relative;
    width: 616px;
    height: 480px;
    padding-top: 12px;
    border: 2px solid #8db8f5;
    box-shadow: 0 0 3px #8db8f5;
}
.chart {
    display: block;
}
.chart-title {
    position: relative;
    height: 37px;
    margin: 0 3px 0 8px;
    border-bottom: 2px dashed #1b5e45;
    font-size: 28px;
    font-weight: 700;
    line-height: 34px;
    color: #1b5e45;
}
.chart-title::before {
    content: "";
    position: absolute;
    left: -4px;
    bottom: -8px;
    width: 14px;
    height: 14px;
    border-radius: 50%;
    background-color: #1b5e45;
}
.chart-bars {
    width: 612px;
    height: 424px;
}
.tooltip {
    position: absolute;
    left: -2px;
    top: 53px;
    width: 504px;
    height: 120px;
    padding: 20px 25px 0 24px;
    border-radius: 8px;
    background-color: rgba(255,255,255,0.93);
    box-shadow: 0 2px 18px rgba(0,0,0,0.2);
    color: #7a7a7a;
}
.tooltip-title {
    font-size: 24px;
    line-height: 32px;
}
.tooltip-row {
    display: flex;
    align-items: center;
    margin-top: 17px;
    font-size: 24px;
    line-height: 32px;
}
.tooltip-dot {
    width: 16px;
    height: 16px;
    margin-right: 23px;
    border-radius: 50%;
    background-color: #2d6f5a;
}
.tooltip-name {
    flex: 1;
}
.chart-block {
    margin-top: 30px;
    padding-left: 16px;
}
.chart-block .chart-title {
    margin-right: 23px;
}
.chart-trend {
    width: 650px;
    height: 480px;
    margin-left: -16px;
}
.kpis {
    display: flex;
    justify-content: center;
    gap: 25px;
}
.kpi {
    width: 300px;
    text-align: center;
}
.kpi-value {
    height: 41px;
    margin-top: -3px;
    margin-bottom: 3px;
    font-size: 34px;
    font-weight: 700;
    line-height: 40px;
    color: #1b5e45;
}
.kpi-label {
    font-size: 24.4px;
    line-height: 36px;
    color: #555;
}
.map-title {
    margin: 48px 0 0;
    font-size: 38px;
    font-weight: 700;
    line-height: 50px;
    text-align: center;
    color: #1b5e45;
}
.map {
    display: block;
    width: 820px;
    height: 860px;
    margin: 17px 0 0 135px;
}
.prov polygon {
    stroke: #555;
    stroke-width: 1;
    stroke-linejoin: round;
}
.c0 { fill: #c9e3dd; }
.c1 { fill: #a3d8cb; }
.c1b { fill: #8ccdb6; }
.c1c { fill: #95d4c0; }
.c2 { fill: #6cc1a0; }
.c2b { fill: #78c6aa; }
.c3 { fill: #55b08f; }
.c4 { fill: #47a382; }
.c5 { fill: #2f8a68; }
.c6 { fill: #237f5a; }
.c8 { fill: #0b4a3e; }
.c-none { fill: #e8e8e8; }
.dashes {
    fill: none;
    stroke: #444;
    stroke-width: 1.5;
}
.isles {
    fill: none;
    stroke: #666;
    stroke-width: 1.5;
}
.map-label text {
    font-family: Inter, "Noto Sans CJK SC", sans-serif;
    font-size: 16px;
    text-anchor: middle;
    dominant-baseline: central;
    fill: #111;
}
.handle {
    stroke: #fff;
    stroke-width: 2;
}
.range-text text {
    font-family: Inter, sans-serif;
    font-size: 23px;
    text-anchor: middle;
    dominant-baseline: central;
    fill: #333;
}
.range-text .range-num {
    font-size: 25px;
    text-anchor: end;
}
.zoom-card {
    position: absolute;
    left: 35px;
    top: 807px;
    display: flex;
    flex-direction: column;
    align-items: center;
    gap: 19px;
    width: 64px;
    height: 210px;
    padding-top: 5px;
    border-radius: 10px;
    background-color: #f3f4fa;
    box-shadow: 0 2px 14px rgba(0,0,0,0.06);
}
.zoom-btn {
    display: flex;
    align-items: center;
    justify-content: center;
    flex: none;
    width: 54px;
    height: 54px;
    border: 2px solid #d5d8e2;
    border-radius: 50%;
    background-color: #fff;
}
.zoom-btn svg {
    width: 22px;
    height: 22px;
    fill: none;
    stroke: #555;
    stroke-width: 1.8;
}
.col-right {
    padding: 30px 0 0 21px;
}
.col-right .chart-title {
    margin-right: 12px;
}
.chart-share {
    width: 645px;
    height: 420px;
    margin: 2px 0 0 -21px;
}
.chart-title-pie {
    height: 36px;
    margin-top: 65px;
    padding-left: 18px;
    border-bottom: none;
    line-height: 36px;
}
.chart-title-pie::after {
    content: "";
    position: absolute;
    left: 0;
    right: 0;
    top: 22px;
    border-top: 2px dashed #1b5e45;
}
.chart-title-pie::before {
    bottom: 7px;
    left: -2px;
    z-index: 2;
}
.chart-title-pie span {
    position: relative;
    z-index: 1;
    padding-right: 6px;
    background-color: #f5f6fb;
}
.chart-pie {
    width: 645px;
    height: 480px;
    margin: -2px 0 0 -21px;
}

/* chart text and marks */
.ct,
.ct text {
    font-size: 18px;
    text-anchor: middle;
    dominant-baseline: central;
    fill: #333;
}
.ct-start,
.ct-start text {
    text-anchor: start;
}
.ct-end,
.ct-end text {
    text-anchor: end;
}
.ct-white text {
    fill: #fff;
}
.ct-grey text {
    fill: #555;
}
.legend-dot {
    fill: #2d6f5a;
}
.row-hover {
    fill: #e6eaf3;
}
.bar rect {
    fill: #2d6f5a;
}
.area-dot {
    fill: #bfd4cf;
}
.grid path {
    fill: none;
    stroke: #bbb;
    stroke-width: 2;
}
.area {
    fill: #2d6f5a;
    fill-opacity: 0.27;
}
.trend-line {
    fill: none;
    stroke: #2d7a60;
    stroke-width: 2.5;
}
.trend-dots circle {
    fill: #2d6f5a;
    stroke: #fff;
    stroke-width: 2;
}
.ring {
    fill: none;
    stroke: #14573f;
    stroke-width: 4;
}
.share-line {
    fill: none;
    stroke: #14573f;
    stroke-width: 5;
}
.diamonds path {
    fill: #14573f;
    stroke: #fff;
    stroke-width: 1.5;
}
.leader polyline {
    fill: none;
    stroke-width: 2;
}
.pie-label text {
    font-size: 22px;
    dominant-baseline: central;
    fill: #555;
}
.pie-label-end text {
    text-anchor: end;
}
.bottom-fade {
    position: absolute;
    left: -100px;
    right: 400px;
    bottom: 0;
    height: 56px;
    padding-left: 498px;
    background: linear-gradient(to bottom, rgba(208,209,214,0), #d0d1d6);
    -webkit-mask-image: linear-gradient(to right, transparent, #000 22%, #000 80%, transparent);
    mask-image: linear-gradient(to right, transparent, #000 22%, #000 80%, transparent);
    text-align: center;
    font-size: 26px;
    letter-spacing: 2.7px;
    line-height: 61px;
    color: rgba(255,255,255,0.45);
}
```
